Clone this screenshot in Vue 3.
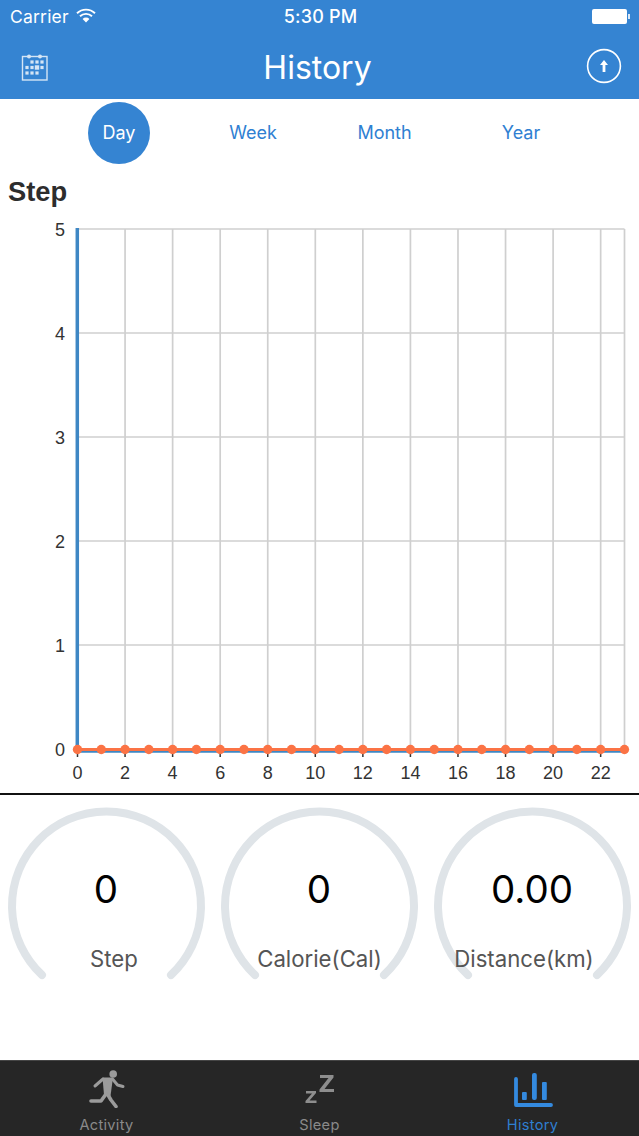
<script setup>
const tabs = [
  { label: 'Day', active: true },
  { label: 'Week' },
  { label: 'Month' },
  { label: 'Year' }
]
const px = h => 77.5 + h * 23.78
const py = v => 749 - v * 104
const hours = Array.from({ length: 24 }, (_, i) => i)
const even = hours.filter(h => h % 2 === 0)
const vals = [0, 1, 2, 3, 4, 5]
const gauges = [
  { value: '0', label: 'Step', lx: 114 },
  { value: '0', label: 'Calorie(Cal)', lx: 106.5 },
  { value: '0.00', label: 'Distance(km)', lx: 98 }
]
const calDots = [
  [11, 9], [16, 9], [21, 9],
  [6, 14.5], [11, 14.5], [21, 14.5],
  [6, 20], [11, 20], [16, 20]
]
</script>

<template>
  <div class="page">
    <header class="header">
      <div class="status">
        <div class="status-left">
          <span>Carrier</span>
          <svg width="20" height="15" viewBox="0 0 20 15" class="wifi">
            <path d="M1 5.2a13 13 0 0 1 18 0" fill="none" stroke="#fff" stroke-width="1.9" />
            <path d="M4 8.3a8.6 8.6 0 0 1 12 0" fill="none" stroke="#fff" stroke-width="1.9" />
            <path d="M6.6 11a4.7 4.7 0 0 1 6.8 0L10 14.4z" fill="#fff" />
          </svg>
        </div>
        <span class="time">5:30 PM</span>
        <div class="battery"><i class="cell"></i><i class="nub"></i></div>
      </div>
      <div class="nav">
        <svg width="28" height="28" viewBox="0 0 28 28" class="cal">
          <rect x="1.500" y="3.500" width="24.500" height="23.500" fill="none" stroke="#d5e5f5" stroke-width="1.400" />
          <circle cx="8" cy="3.500" r="2" fill="#d5e5f5" />
          <circle cx="19" cy="3.500" r="2" fill="#d5e5f5" />
          <rect v-for="(d, i) in calDots" :key="i" :x="d[0] - 1.6" :y="d[1] - 1.6" width="3.200" height="3.200" fill="#d5e5f5" />
          <rect x="13.800" y="12.300" width="4.400" height="4.400" fill="#d5e5f5" />
        </svg>
        <h1 class="title">History</h1>
        <svg width="36" height="36" viewBox="0 0 36 36" class="up">
          <circle cx="18" cy="18" r="16.400" fill="none" stroke="#fff" stroke-width="1.600" />
          <path d="M18 12l4 5h-2.600v7h-2.800v-7H14z" fill="#fff" />
        </svg>
      </div>
    </header>

    <div class="tabs">
      <span v-for="t in tabs" :key="t.label" class="tab" :class="{ active: t.active }">{{ t.label }}</span>
    </div>

    <h2 class="section">Step</h2>

    <svg class="chart" width="639" height="574" viewBox="0 0 639 574">
      <g transform="translate(0 -219)">
        <line v-for="h in even" :key="'g' + h" :x1="px(h)" :x2="px(h)" y1="229" y2="749" class="grid" />
        <line x1="624.5" x2="624.5" y1="229" y2="749" class="grid" />
        <line v-for="v in vals" :key="'h' + v" x1="77" x2="624.5" :y1="py(v)" :y2="py(v)" class="grid" />
        <line v-for="h in even" :key="'t' + h" :x1="px(h)" :x2="px(h)" y1="751" y2="757" class="tick" />
        <line x1="77.3" x2="77.3" y1="228" y2="753" class="axis" />
        <line x1="75" x2="625" y1="751" y2="751" class="axis" />
        <line x1="77" x2="624" y1="749.5" y2="749.5" class="series" />
        <circle v-for="h in hours" :key="'c' + h" :cx="px(h)" cy="749.500" r="4.700" fill="#fb7345" />
        <text v-for="v in vals" :key="'y' + v" x="60" :y="py(v) + 6.5" text-anchor="middle" class="lbl">{{ v }}</text>
        <text v-for="h in even" :key="'x' + h" :x="px(h)" y="779" text-anchor="middle" class="lbl">{{ h }}</text>
      </g>
    </svg>

    <div class="gauges">
      <svg v-for="g in gauges" :key="g.label" class="gauge" width="213" height="265" viewBox="0 0 213 265">
        <path d="M42 180A94.500 94.500 0 1 1 171 180" class="arc" />
        <text x="106" y="107.500" text-anchor="middle" class="val">{{ g.value }}</text>
        <text :x="g.lx" y="171.500" text-anchor="middle" class="gl">{{ g.label }}</text>
      </svg>
    </div>

    <nav class="bar">
      <div class="item">
        <svg width="40" height="40" viewBox="0 0 40 40">
          <circle cx="26.200" cy="6" r="3.800" fill="#9b9b9b" />
          <path d="M15.500 9.500H26L23.500 28L17 27z" fill="#9b9b9b" />
          <path d="M16 11L8 18M25.500 11L30.500 17L36 18.500" fill="none" stroke="#9b9b9b" stroke-width="3" stroke-linecap="round" stroke-linejoin="round" />
          <path d="M19 26L14 33H4M21 27L24 32L29 38.500" fill="none" stroke="#9b9b9b" stroke-width="3.600" stroke-linecap="round" stroke-linejoin="round" />
        </svg>
        <span>Activity</span>
      </div>
      <div class="item">
        <svg width="40" height="40" viewBox="0 0 40 40">
          <path d="M20 7H33.500V9.500L24.500 21H34V24H19.500V21.500L28.500 10H20z" fill="#8d8d8d" />
          <path d="M6 23H16V25L9.500 32.500H16.500V35H5.500V33L12 25.500H6z" fill="#8d8d8d" />
        </svg>
        <span>Sleep</span>
      </div>
      <div class="item on">
        <svg width="42" height="40" viewBox="0 0 42 40">
          <path d="M4 11V37H39" fill="none" stroke="#348adf" stroke-width="3.800" stroke-linecap="round" stroke-linejoin="round" />
          <rect x="10" y="24" width="4.800" height="8" rx="1" fill="#348adf" />
          <rect x="20" y="5" width="4.800" height="27" rx="2" fill="#348adf" />
          <rect x="30" y="14" width="4.800" height="18" rx="1" fill="#348adf" />
        </svg>
        <span>History</span>
      </div>
    </nav>
  </div>
</template>

<style>
html, body { margin: 0; background: #fff; }
</style>

<style scoped>
.page {
  width: 639px;
  height: 1136px;
  display: flex;
  flex-direction: column;
  overflow: hidden;
  background: #fff;
  font-family: Inter, "Liberation Sans", sans-serif;
}
.header { height: 99px; flex: none; background: #3584d2; color: #fff; box-sizing: border-box; }
.status {
  height: 33px;
  padding: 0 9px 0 10px;
  display: grid;
  grid-template-columns: 1fr auto 1fr;
  align-items: center;
  font-size: 17.500px;
}
.status-left { display: flex; align-items: center; gap: 7px; letter-spacing: 0.2px; }
.wifi { margin-top: -3px; }
.time { font-weight: 500; font-size: 18px; letter-spacing: 0.2px; margin-left: 1px; }
.battery { justify-self: end; display: flex; align-items: center; margin-top: -1px; }
.cell { width: 35px; height: 15px; border-radius: 2px; background: #fff; display: block; }
.nub { width: 2px; height: 5px; background: #dbe8f6; display: block; margin-left: 1px; }
.nav {
  height: 66px;
  padding: 0 17px 0 21px;
  display: flex;
  align-items: center;
  justify-content: space-between;
}
.cal { margin-top: 1px; }
.title { margin: 2px 0 0; font-weight: 400; font-size: 32px; color: #fff; }
.tabs {
  height: 68px;
  flex: none;
  display: grid;
  grid-template-columns: 134px 131.500px 136.500px 62px;
  justify-content: start;
  padding-left: 88px;
  align-items: center;
}
.tab {
  width: 62px;
  height: 62px;
  margin-top: -1px;
  border-radius: 50%;
  display: flex;
  align-items: center;
  justify-content: center;
  color: #2f80d2;
  font-size: 18px;
}
.tab.active { background: #3584d2; color: #fff; }
.section {
  margin: 0;
  height: 52px;
  box-sizing: border-box;
  padding: 8px 0 0 8px;
  font-family: "Liberation Sans", sans-serif;
  font-weight: 700;
  font-size: 27.300px;
  line-height: 33px;
  color: #2d2d2d;
  flex: none;
}
.chart { display: block; flex: none; border-bottom: 2px solid #111; box-sizing: content-box; }
.grid { stroke: #cfcfcf; stroke-width: 1.700; }
.tick { stroke: #333; stroke-width: 1.500; }
.axis { stroke: #3e87c4; stroke-width: 3.500; }
.series { stroke: #fb7345; stroke-width: 3; }
.lbl { font-family: "Liberation Sans", sans-serif; font-size: 18px; fill: #333; }
.gauges {
  flex: 1;
  min-height: 0;
  display: grid;
  grid-template-columns: repeat(3, 213px);
}
.gauge { display: block; }
.arc { fill: none; stroke: #dfe4e8; stroke-width: 8; stroke-linecap: round; }
.val { font-size: 38.500px; fill: #000; }
.gl { font-size: 22.200px; fill: #555; }
.bar {
  height: 76px;
  flex: none;
  box-sizing: border-box;
  background: #262626;
  border-top: 1px solid #454545;
  display: grid;
  grid-template-columns: repeat(3, 213px);
}
.item {
  display: flex;
  flex-direction: column;
  align-items: center;
  color: #8a8a8a;
  font-size: 14.600px;
  letter-spacing: 0.3px;
  padding-top: 7px;
  line-height: 18px;
}
.item svg { display: block; flex: none; margin-bottom: 8px; }
.item.on { color: #2f7fd0; }
</style>
